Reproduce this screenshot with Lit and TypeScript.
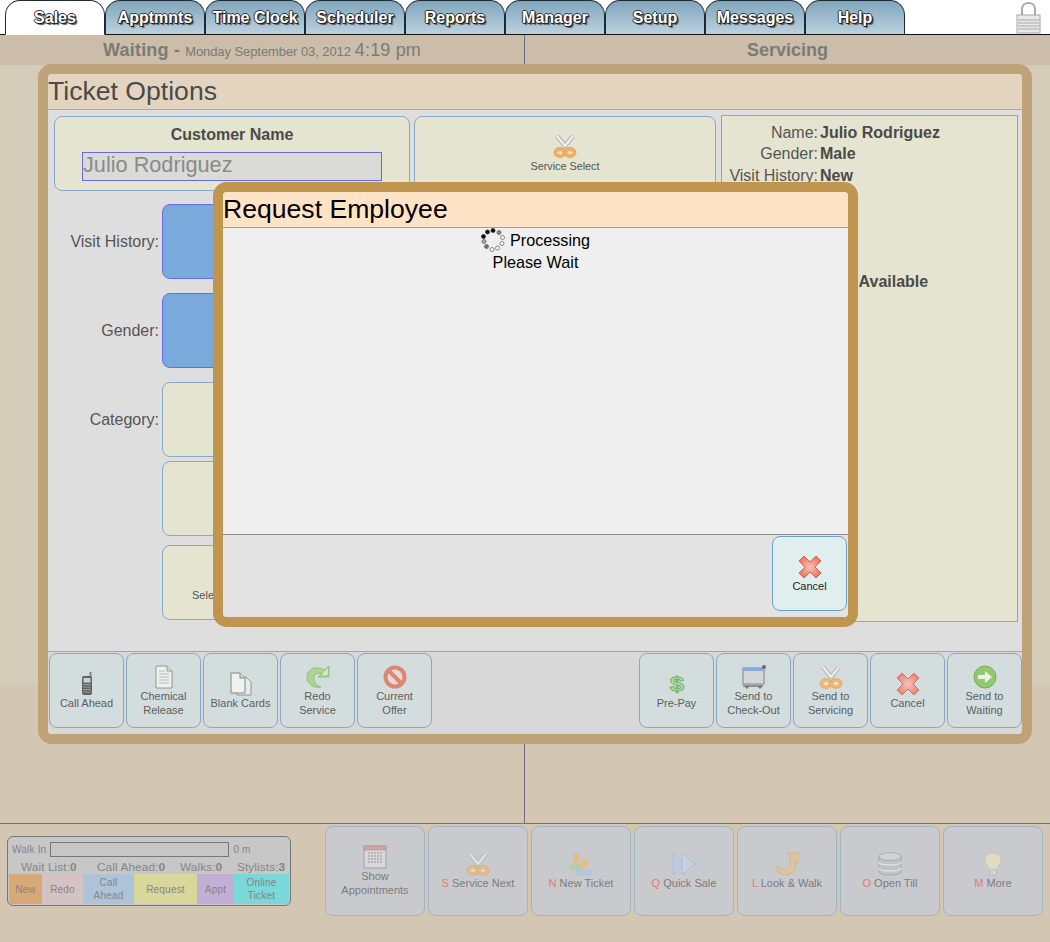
import { css, html, svg, LitElement, TemplateResult } from "lit";
import { customElement } from "lit/decorators.js";

const scissors = html`<svg width="24" height="24" viewBox="0 0 24 24">
  <path d="M4 2 L12 12 L20 2" fill="none" stroke="#a5a5a5" stroke-width="4.4" stroke-linejoin="round" />
  <path d="M4 2 L12 12 L20 2" fill="none" stroke="#eeeeee" stroke-width="2.8" stroke-linejoin="round" />
  <ellipse cx="7" cy="18.5" rx="6" ry="5" fill="#f0b264" stroke="#e09a4c" stroke-width=".7" />
  <ellipse cx="17" cy="18.5" rx="6" ry="5" fill="#f0b264" stroke="#e09a4c" stroke-width=".7" />
  <ellipse cx="7" cy="18.5" rx="2.4" ry="1.5" fill="#f6e6c8" />
  <ellipse cx="17" cy="18.5" rx="2.4" ry="1.5" fill="#f6e6c8" />
</svg>`;

const phone = html`<svg width="24" height="24" viewBox="0 0 24 24">
  <rect x="14.5" y="0" width="2" height="6" fill="#777" />
  <rect x="7" y="4" width="10" height="19" rx="2" fill="#4c4c4c" />
  <rect x="8.5" y="6" width="7" height="4.5" fill="#c8d4d4" />
  <path d="M8.5 12.5h7M8.5 15h7M8.5 17.5h7M8.5 20h7" stroke="#ccc" stroke-width="1.2" stroke-dasharray="1.2 .8" />
</svg>`;

const doc = html`<svg width="24" height="24" viewBox="0 0 24 24">
  <path d="M4 1 H15 L20 6 V23 H4 Z" fill="#f4f4f4" stroke="#8a8a8a" />
  <path d="M15 1 V6 H20" fill="#ddd" stroke="#8a8a8a" />
  <path d="M7 6h6M7 9h10M7 12h10M7 15h10M7 18h10" stroke="#b5b5b5" />
</svg>`;

const docs = html`<svg width="24" height="24" viewBox="0 0 24 24">
  <path d="M8 5 H17 L22 10 V23 H8 Z" fill="#eee" stroke="#888" />
  <path d="M2 1 H11 L16 6 V21 H2 Z" fill="#f6f6f6" stroke="#777" />
  <path d="M11 1 V6 H16" fill="#ddd" stroke="#777" />
</svg>`;

const redo = html`<svg width="24" height="24" viewBox="0 0 24 24">
  <path d="M23 1 V12 H12 L15.5 8.5 C10 7 7 11 8 15 C9 19 12 21 15 22 C8 24 1 19 1 12 C1 4 10 0 18 5 Z" fill="#a3d585" stroke="#74ad55" stroke-width=".7" />
  <path d="M21.5 3 V10 H16" fill="#d9f0ca" />
</svg>`;

const noSign = html`<svg width="24" height="24" viewBox="0 0 24 24">
  <circle cx="12" cy="12" r="9.5" fill="#e8dad4" stroke="#df7865" stroke-width="4" />
  <path d="M5 5 L19 19" stroke="#df7865" stroke-width="4" />
</svg>`;

const dollar = html`<svg width="24" height="24" viewBox="0 0 24 24">
  <text transform="scale(1.2 1)" x="10" y="19" text-anchor="middle" font-family="Liberation Sans" font-weight="700" font-size="21" fill="#b5e09a" stroke="#66a94a" stroke-width=".9">$</text>
</svg>`;

const cart = html`<svg width="24" height="24" viewBox="0 0 24 24">
  <rect x="1" y="3" width="21" height="16" fill="#d6d6d6" stroke="#777" />
  <rect x="1" y="3" width="21" height="3" fill="#7f9fe0" />
  <circle cx="22" cy="2" r="2" fill="#555" />
  <path d="M1 21 H21" stroke="#666" stroke-width="1.5" />
  <circle cx="5" cy="22" r="1.6" fill="#666" />
  <circle cx="18" cy="22" r="1.6" fill="#666" />
</svg>`;

const cross = html`<svg width="24" height="24" viewBox="0 0 24 24">
  <defs>
    <radialGradient id="crossFill">
      <stop offset="0" stop-color="#fcc0b4" />
      <stop offset="1" stop-color="#ec7a6a" />
    </radialGradient>
  </defs>
  <path d="M6 1 L12 7 L18 1 L23 6 L17 12 L23 18 L18 23 L12 17 L6 23 L1 18 L7 12 L1 6 Z" fill="url(#crossFill)" stroke="#d8604e" />
</svg>`;

const go = html`<svg width="24" height="24" viewBox="0 0 24 24">
  <circle cx="12" cy="12" r="11" fill="#88c45e" stroke="#6aa348" />
  <path d="M5 10 H12 V6 L19 12 L12 18 V14 H5 Z" fill="#eef7e6" />
</svg>`;

const calendar = html`<svg width="24" height="24" viewBox="0 0 24 24">
  <rect x="1" y="1" width="22" height="22" fill="#e2e2e2" stroke="#888" />
  <rect x="1" y="1" width="22" height="4" fill="#d98a8a" stroke="#a86a6a" stroke-width=".6" />
  <path d="M5 8h14M5 11h14M5 14h14M5 17h14" stroke="#aaa" stroke-width="2" stroke-dasharray="2 1" />
</svg>`;

const people = html`<svg width="24" height="24" viewBox="0 0 24 24">
  <rect x="1" y="12" width="12" height="6" fill="#a7d090" />
  <ellipse cx="7" cy="6" rx="3.5" ry="5.5" fill="#eeb56b" />
  <rect x="7" y="18" width="16" height="6" fill="#a9c3e6" />
  <ellipse cx="15" cy="12" rx="3.5" ry="5.5" fill="#f2b75e" />
</svg>`;

const arrows = html`<svg width="24" height="24" viewBox="0 0 24 24">
  <path d="M1 1 L12 12 L1 23 Z" fill="#b6ccec" stroke="#9db5dc" />
  <path d="M10 1 L23 12 L10 23 Z" fill="#c3d6f0" stroke="#9db5dc" />
</svg>`;

const hook = html`<svg width="24" height="24" viewBox="0 0 24 24">
  <path d="M12 1 H24 V12 L20.5 8.5 C22 16 18 23 11 23 C5 23 1 18 1 13 C4 17 8 18 11 17 C14 16 16 12 15 5 Z" fill="#e9c27c" stroke="#e09a5c" stroke-width=".7" />
</svg>`;

const db = html`<svg width="24" height="24" viewBox="0 0 24 24">
  <path d="M1 4 V20 C1 24 23 24 23 20 V4 Z" fill="#bdbdbd" stroke="#999" />
  <ellipse cx="12" cy="4.5" rx="11" ry="4" fill="#d8d8d8" stroke="#999" />
  <path d="M1 10 C1 14 23 14 23 10 M1 16 C1 20 23 20 23 16" fill="none" stroke="#eee" stroke-width="1.5" />
</svg>`;

const bulb = html`<svg width="24" height="24" viewBox="0 0 24 24">
  <path d="M12 1 C6 1 4 5 4 8 C4 12 8 14 8 18 H16 C16 14 20 12 20 8 C20 5 18 1 12 1 Z" fill="#f2e6c4" stroke="#d8c79a" />
  <rect x="8.5" y="18" width="7" height="5" fill="#dcdcdc" stroke="#aaa" stroke-width=".7" />
</svg>`;

const spinnerDots = [
  [12, 2.5, "#111", "#111"],
  [18, 4.5, "#888", "#555"],
  [21.5, 9.5, "#fff", "#555"],
  [21, 15.5, "#fff", "#555"],
  [16.5, 20, "#fff", "#555"],
  [11, 21.5, "#fff", "#555"],
  [5.5, 18.5, "#777", "#555"],
  [3, 13.5, "#aaa", "#555"],
  [2.5, 8.5, "#111", "#111"],
  [6.5, 4, "#111", "#111"],
] as [number, number, string, string][];

const spinner = html`<svg width="24" height="24" viewBox="0 0 24 24">
  ${spinnerDots.map(
    ([x, y, fill, stroke]) =>
      svg`<circle cx=${x} cy=${y} r="2" fill=${fill} stroke=${stroke} stroke-width=".7"></circle>`
  )}
</svg>`;

const tabs = ["Sales", "Apptmnts", "Time Clock", "Scheduler", "Reports", "Manager", "Setup", "Messages", "Help"];

const leftActions: [TemplateResult, string[]][] = [
  [phone, ["Call Ahead"]],
  [doc, ["Chemical", "Release"]],
  [docs, ["Blank Cards"]],
  [redo, ["Redo", "Service"]],
  [noSign, ["Current", "Offer"]],
];

const rightActions: [TemplateResult, string[]][] = [
  [dollar, ["Pre-Pay"]],
  [cart, ["Send to", "Check-Out"]],
  [scissors, ["Send to", "Servicing"]],
  [cross, ["Cancel"]],
  [go, ["Send to", "Waiting"]],
];

const footerButtons: [TemplateResult, string, string[]][] = [
  [calendar, "", ["Show", "Appointments"]],
  [scissors, "S", ["Service Next"]],
  [people, "N", ["New Ticket"]],
  [arrows, "Q", ["Quick Sale"]],
  [hook, "L", ["Look & Walk"]],
  [db, "O", ["Open Till"]],
  [bulb, "M", ["More"]],
];

@customElement("app-root")
export class AppRoot extends LitElement {
  static styles = css`
    :host {
      display: block;
      position: relative;
      width: 1050px;
      height: 942px;
      overflow: hidden;
      background: #d3c6b3;
      font-family: "Liberation Sans", Arial, sans-serif;
      color: #555;
    }

    .tabbar {
      display: flex;
      height: 34px;
      padding-left: 5px;
      background: #fff;
      border-bottom: 1px solid #111;
    }

    .tab {
      box-sizing: border-box;
      width: 100px;
      height: 35px;
      display: flex;
      align-items: center;
      justify-content: center;
      border: 1px solid #1c2a33;
      border-bottom: 1px solid #111;
      border-radius: 15px 15px 0 0;
      background: linear-gradient(#7fa5bc, #bcd2df);
      color: #fff;
      font-size: 16px;
      font-weight: 700;
      text-shadow: 1px 1px 0 #222, -1px 0 0 #333, 0 -1px 0 #333, 1px 0 0 #333, 0 1px 0 #333, 2px 2px 1px #555;
    }

    .tab.active {
      background: #fff;
      border-bottom-color: #fff;
    }

    .lock {
      margin-left: auto;
      margin-right: 9px;
      height: 32px;
      padding-top: 2px;
    }

    .status {
      display: grid;
      grid-template-columns: 524px 1fr;
      height: 30px;
      background: #cbbda9;
      color: #7b7b74;
      font-size: 18px;
      line-height: 30px;
      text-align: center;
    }

    .status b {
      letter-spacing: 0.2px;
    }

    .status small {
      font-size: 13px;
      letter-spacing: -0.08px;
      margin-right: -1px;
    }

    .status .now {
      font-size: 18px;
      letter-spacing: 0.15px;
    }

    .status .servicing {
      font-weight: 700;
      border-left: 1px solid #6c6f80;
    }

    .panes {
      height: 758px;
      background: linear-gradient(#d4ccb9 620px, #d3c6b3 620px);
      display: grid;
      grid-template-columns: 524px 1fr;
    }

    .panes div + div {
      border-left: 1px solid #6c6f80;
    }

    .bottom {
      display: flex;
      box-sizing: border-box;
      height: 119px;
      border-top: 1px solid #77736c;
      padding: 2px 0 0 7px;
    }

    .counters {
      box-sizing: border-box;
      width: 284px;
      height: 70px;
      margin-top: 10px;
      margin-right: 34px;
      padding: 4px 1px 1px;
      border: 1px solid #777;
      border-radius: 6px;
      background: #c7c7c7;
      color: #858585;
      overflow: hidden;
    }

    .walk {
      display: flex;
      align-items: center;
      height: 16px;
      padding-left: 3px;
      font-size: 10px;
      letter-spacing: 0.2px;
    }

    .walk i {
      display: block;
      box-sizing: border-box;
      width: 179px;
      height: 15px;
      margin: 0 4px;
      border: 1px solid #777;
    }

    .stats {
      display: flex;
      height: 17px;
      padding: 3px 0 0 12px;
      box-sizing: border-box;
      font-size: 11.8px;
      line-height: 14px;
      letter-spacing: 0.1px;
      white-space: nowrap;
    }

    .stats span:nth-child(1) {
      width: 76px;
    }

    .stats span:nth-child(2) {
      width: 83px;
    }

    .stats span:nth-child(3) {
      width: 57px;
    }

    .cells {
      display: grid;
      grid-template-columns: 33px 41px 51px 63px 37px 55px;
      height: 30px;
      font-size: 10px;
      line-height: 13px;
      text-align: center;
      letter-spacing: 0.2px;
    }

    .cells div {
      display: flex;
      align-items: center;
      justify-content: center;
    }

    .foot-buttons {
      display: flex;
      gap: 3px;
    }

    .btn {
      box-sizing: border-box;
      width: 75px;
      height: 75px;
      display: flex;
      flex-direction: column;
      align-items: center;
      justify-content: center;
      border: 1px solid #85a9c6;
      border-radius: 8px;
      background: #d3dddd;
      font-size: 11px;
      line-height: 14px;
      color: #5d5d5d;
      text-align: center;
    }

    .btn svg {
      display: block;
      opacity: 0.85;
    }

    .btn.foot {
      width: 100px;
      height: 90px;
      background: #c9cacd;
      border-color: #9db5c5;
      color: #7c7c7c;
    }

    .btn.foot svg {
      opacity: 0.6;
    }

    .hot {
      color: #e57777;
    }

    .window {
      position: absolute;
      box-sizing: border-box;
      display: flex;
      flex-direction: column;
      border-radius: 14px;
      overflow: hidden;
    }

    .ticket {
      left: 38px;
      top: 64px;
      width: 994px;
      height: 680px;
      border: 10px solid #bfa378;
      background: #dedede;
    }

    .title {
      flex: none;
      box-sizing: border-box;
      height: 36px;
      line-height: 34px;
      font-size: 26.6px;
      border-bottom: 1px solid #b0a694;
    }

    .ticket .title {
      background: #e3d4c0;
      color: #4a4a4a;
    }

    .ticket-body {
      flex: 1;
      display: flex;
      gap: 5px;
      padding: 6px 0 0 6px;
    }

    .left {
      width: 662px;
    }

    .top-row {
      display: flex;
      gap: 4px;
      margin-bottom: 13px;
    }

    .card {
      box-sizing: border-box;
      height: 75px;
      border: 1px solid #85a9c6;
      border-radius: 8px;
      background: #e4e4d0;
    }

    .name-card {
      width: 356px;
      padding: 9px 27px 0;
      color: #4a4a4a;
      font-size: 16px;
      font-weight: 700;
      text-align: center;
    }

    .name-input {
      box-sizing: border-box;
      height: 29px;
      width: 300px;
      margin-top: 8px;
      border: 1px solid #6b6be0;
      background: #dadbd6;
      color: #8a8a8a;
      font-size: 21.7px;
      font-weight: 400;
      line-height: 24px;
      text-align: left;
    }

    .service-card {
      width: 302px;
      display: flex;
      flex-direction: column;
      align-items: center;
      padding-top: 17px;
      font-size: 10.8px;
      line-height: 14px;
    }

    .service-card span {
      margin-top: 1px;
    }

    .field {
      display: grid;
      grid-template-columns: 105px 1fr;
      column-gap: 3px;
      margin-bottom: 14px;
      font-size: 16px;
    }

    .field label {
      height: 75px;
      line-height: 75px;
      text-align: right;
    }

    .field .stack {
      display: flex;
      flex-direction: column;
      gap: 4px;
    }

    .choice {
      width: 92px;
    }

    .choice.blue {
      background: #7aaadc;
      border-color: #6b6be8;
    }

    .choice.select {
      margin-top: 5px;
      padding: 42px 0 0 29px;
      font-size: 11px;
      line-height: 14px;
    }

    .summary {
      box-sizing: border-box;
      width: 297px;
      height: 507px;
      margin-top: -1px;
      padding: 6px 0 0 5px;
      border: 1px solid #85a9c6;
      background: #e4e4d0;
      display: grid;
      grid-template-columns: 91px 1fr;
      grid-auto-rows: 21.3px;
      column-gap: 2px;
      align-content: start;
      font-size: 16px;
      line-height: 21px;
      white-space: nowrap;
    }

    .summary span {
      text-align: right;
    }

    .summary b {
      color: #4a4a4a;
    }

    .actions {
      flex: none;
      display: flex;
      justify-content: space-between;
      height: 83px;
      box-sizing: border-box;
      padding: 1px 0 0 1px;
      border-top: 1px solid #a5a5a5;
      background: #d8d8d8;
    }

    .group {
      display: flex;
      gap: 2px;
    }

    .request {
      left: 213px;
      top: 182px;
      width: 645px;
      height: 445px;
      border: 10px solid #bf954f;
      background: #efefef;
      color: #000;
    }

    .request .title {
      background: #fee3c6;
      border-bottom-color: #b09a80;
    }

    .loading {
      flex: 1;
      font-size: 16.2px;
      text-align: center;
      line-height: 20px;
    }

    .loading .line {
      display: flex;
      align-items: center;
      justify-content: center;
      gap: 5px;
      height: 24px;
    }

    .request-foot {
      flex: none;
      box-sizing: border-box;
      height: 83px;
      display: flex;
      justify-content: flex-end;
      padding: 1px 1px 0 0;
      border-top: 1px solid #8f8f8f;
      background: #e3e3e3;
    }

    .request-foot .btn {
      background: #e0eeee;
      border-color: #6a9fcc;
      color: #222;
    }

    .request-foot .btn svg {
      opacity: 1;
    }
  `;

  private button([icon, lines]: [TemplateResult, string[]]) {
    return html`<div class="btn">${icon}${lines.map((l) => html`<span>${l}</span>`)}</div>`;
  }

  render() {
    return html`
      <div class="tabbar">
        ${tabs.map((t, i) => html`<div class="tab ${i === 0 ? "active" : ""}">${t}</div>`)}
        <div class="lock">
          <svg width="25" height="32" viewBox="0 0 25 32">
            <path d="M6 14 V7 C6 -1 19 -1 19 7 V14" fill="none" stroke="#a8a8a8" stroke-width="2" />
            <rect x="1" y="13" width="23" height="18" fill="#e8e8e8" stroke="#a5a5a5" />
            <path d="M2 18h21M2 21h21M2 24h21M2 27h21" stroke="#bdbdbd" stroke-width="1.5" />
          </svg>
        </div>
      </div>

      <div class="status">
        <div><b>Waiting -</b> <small>Monday September 03, 2012</small> <span class="now">4:19 pm</span></div>
        <div class="servicing">Servicing</div>
      </div>

      <div class="panes"><div></div><div></div></div>

      <div class="bottom">
        <div class="counters">
          <div class="walk">Walk In<i></i>0 m</div>
          <div class="stats">
            <span>Wait List:<b>0</b></span>
            <span>Call Ahead:<b>0</b></span>
            <span>Walks:<b>0</b></span>
            <span>Stylists:<b>3</b></span>
          </div>
          <div class="cells">
            <div style="background:#d9a877">New</div>
            <div style="background:#d5c3c3">Redo</div>
            <div style="background:#aec3d8">Call<br />Ahead</div>
            <div style="background:#d8d79c">Request</div>
            <div style="background:#c3afd5">Appt</div>
            <div style="background:#7bd8d8">Online<br />Ticket</div>
          </div>
        </div>
        <div class="foot-buttons">
          ${footerButtons.map(
            ([icon, key, lines]) => html`<div class="btn foot">
              ${icon}
              ${lines.length > 1
                ? lines.map((l) => html`<span>${l}</span>`)
                : html`<span><span class="hot">${key}</span> ${lines[0]}</span>`}
            </div>`
          )}
        </div>
      </div>

      <div class="window ticket">
        <div class="title">Ticket Options</div>
        <div class="ticket-body">
          <div class="left">
            <div class="top-row">
              <div class="card name-card">
                Customer Name
                <div class="name-input">Julio Rodriguez</div>
              </div>
              <div class="card service-card">${scissors}<span>Service Select</span></div>
            </div>
            <div class="field">
              <label>Visit History:</label>
              <div class="card choice blue"></div>
            </div>
            <div class="field">
              <label>Gender:</label>
              <div class="card choice blue"></div>
            </div>
            <div class="field">
              <label>Category:</label>
              <div class="stack">
                <div class="card choice"></div>
                <div class="card choice"></div>
                <div class="card choice select">Select</div>
              </div>
            </div>
          </div>
          <div class="summary">
            <span>Name:</span><b>Julio Rodriguez</b>
            <span>Gender:</span><b>Male</b>
            <span>Visit History:</span><b>New</b>
            <span></span><b></b>
            <span></span><b></b>
            <span></span><b></b>
            <span></span><b></b>
            <span></span><b>First Available</b>
          </div>
        </div>
        <div class="actions">
          <div class="group">${leftActions.map((a) => this.button(a))}</div>
          <div class="group">${rightActions.map((a) => this.button(a))}</div>
        </div>
      </div>

      <div class="window request">
        <div class="title">Request Employee</div>
        <div class="loading">
          <div class="line">${spinner}<span>Processing</span></div>
          Please Wait
        </div>
        <div class="request-foot">${this.button([cross, ["Cancel"]])}</div>
      </div>
    `;
  }
}
